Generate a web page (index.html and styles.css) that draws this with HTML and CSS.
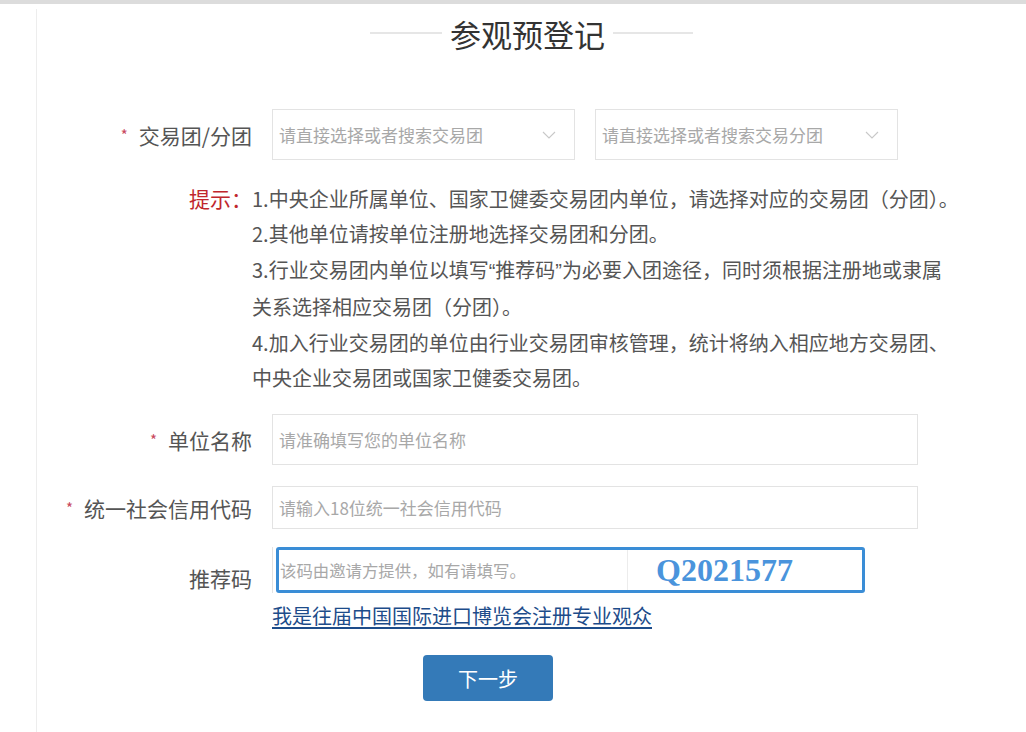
FILE: index.html
```html
<!DOCTYPE html>
<html lang="zh-CN">
<head>
<meta charset="utf-8">
<title>参观预登记</title>
<link rel="stylesheet" href="styles.css">
</head>
<body>
<div class="topbar"></div>
<div class="page">
  <div class="title">
    <span class="tline"></span>
    <h1>参观预登记</h1>
    <span class="tline"></span>
  </div>

  <div class="row row-group">
    <label class="lbl"><span class="req">*</span>交易团/分团</label>
    <div class="selects">
      <div class="select">
        <span class="ph">请直接选择或者搜索交易团</span>
        <svg class="chev" width="14" height="8" viewBox="0 0 14 8"><polyline points="1,1 7,7 13,1" fill="none" stroke="#c8c8c8" stroke-width="1.1"/></svg>
      </div>
      <div class="select">
        <span class="ph">请直接选择或者搜索交易分团</span>
        <svg class="chev" width="14" height="8" viewBox="0 0 14 8"><polyline points="1,1 7,7 13,1" fill="none" stroke="#c8c8c8" stroke-width="1.1"/></svg>
      </div>
    </div>
  </div>

  <div class="tip">
    <div class="tip-lbl">提示：</div>
    <div class="tip-body">
      <p>1.中央企业所属单位、国家卫健委交易团内单位，请选择对应的交易团（分团）。</p>
      <p>2.其他单位请按单位注册地选择交易团和分团。</p>
      <p>3.行业交易团内单位以填写<span class="q">“</span>推荐码<span class="q">”</span>为必要入团途径，同时须根据注册地或隶属<br>关系选择相应交易团（分团）。</p>
      <p>4.加入行业交易团的单位由行业交易团审核管理，统计将纳入相应地方交易团、<br>中央企业交易团或国家卫健委交易团。</p>
    </div>
  </div>

  <div class="row row-name">
    <label class="lbl"><span class="req">*</span>单位名称</label>
    <div class="input input-tall"><span class="ph">请准确填写您的单位名称</span></div>
  </div>

  <div class="row row-code">
    <label class="lbl"><span class="req">*</span>统一社会信用代码</label>
    <div class="input input-short"><span class="ph">请输入18位统一社会信用代码</span></div>
  </div>

  <div class="row row-ref">
    <label class="lbl lbl-low">推荐码</label>
    <div class="ref-field">
      <div class="ref-box">
        <span class="ref-ph">该码由邀请方提供，如有请填写。</span>
        <span class="ref-code">Q2021577</span>
      </div>
    </div>
  </div>

  <div class="link-row">
    <a class="prev-link" href="#">我是往届中国国际进口博览会注册专业观众</a>
  </div>

  <div class="btn-row">
    <button class="btn-next" type="button">下一步</button>
  </div>
</div>
</body>
</html>
```

FILE: styles.css
```css
* { box-sizing: border-box; }

html, body {
  margin: 0;
  padding: 0;
  background: #fff;
}

body {
  font-family: "Noto Sans CJK SC", "Noto Sans", sans-serif;
  color: #555;
  width: 1026px;
  height: 732px;
  overflow: hidden;
}

.topbar {
  height: 4px;
  background: #dcdcdc;
}

.page {
  margin-left: 36px;
  border-left: 1px solid #ededed;
  height: 728px;
}

/* title */
.title {
  margin-top: 5px;
  height: 50px;
  display: flex;
  justify-content: center;
  align-items: center;
  gap: 8px;
}

.title h1 {
  margin: 0;
  font-size: 31px;
  font-weight: 400;
  color: #333;
  line-height: 50px;
}

.tline {
  width: 72px;
  height: 2px;
  background: #e6e6e6;
  margin-bottom: 2px;
}

.tline:last-child { width: 80px; }

/* rows */
.row {
  display: flex;
  align-items: center;
}

.lbl {
  width: 215px;
  flex: none;
  text-align: right;
  font-size: 21px;
  line-height: 28px;
  color: #555;
}

.req {
  color: #c8475d;
  font-size: 15px;
  margin-right: 11px;
  vertical-align: 3px;
}

.row-group { margin-top: 50px; }

.selects {
  margin-left: 20px;
  display: flex;
  gap: 20px;
}

.select {
  width: 303px;
  height: 51px;
  border: 1px solid #e3e3e3;
  display: flex;
  align-items: center;
  justify-content: space-between;
  padding: 0 18px 0 6px;
}

.ph {
  font-size: 17px;
  color: #a8a8a8;
  white-space: nowrap;
}

.chev { flex: none; }

/* tip */
.tip {
  margin-top: 21px;
  display: flex;
  font-size: 20px;
  line-height: 35.4px;
}

.tip-lbl {
  width: 215px;
  flex: none;
  text-align: right;
  font-size: 21px;
  color: #c0262d;
}

.tip-body p {
  margin: 0;
  white-space: nowrap;
  color: #555;
}

.q {
  font-family: "Liberation Sans", sans-serif;
}

/* inputs */
.input {
  margin-left: 20px;
  width: 646px;
  border: 1px solid #e3e3e3;
  display: flex;
  align-items: center;
  padding: 0 6px;
}

.input-tall { height: 51px; }
.input-short { height: 43px; }

.row-name { margin-top: 19px; }
.row-code { margin-top: 21px; }

.row-ref {
  margin-top: 18px;
  align-items: flex-end;
}

.lbl-low { margin-bottom: 1px; }

.ref-field {
  margin-left: 20px;
  border-left: 1px solid #e3e3e3;
  padding-left: 3px;
}

.ref-box {
  width: 589px;
  height: 46px;
  border: 3px solid #3a8dd6;
  border-radius: 3px;
  display: flex;
  align-items: stretch;
}

.ref-ph {
  width: 349px;
  flex: none;
  border-right: 1px solid #ececec;
  padding-left: 1px;
  font-size: 16.4px;
  color: #a8a8a8;
  display: flex;
  align-items: center;
  white-space: nowrap;
}

.ref-code {
  padding-left: 28px;
  font-family: "Liberation Serif", "DejaVu Serif", serif;
  font-weight: 700;
  font-size: 32px;
  color: #4a94dc;
  display: flex;
  align-items: center;
  line-height: 1;
}

/* link */
.link-row {
  margin-top: 9px;
  padding-left: 235px;
  line-height: 28px;
}

.prev-link {
  font-size: 20px;
  color: #1d4c8a;
  text-decoration: underline;
  text-underline-offset: 3px;
}

/* button */
.btn-row {
  margin-top: 24px;
  padding-left: 386px;
}

.btn-next {
  width: 130px;
  height: 46px;
  border: none;
  border-radius: 4px;
  background: #347ab8;
  color: #fff;
  font-family: "Noto Sans CJK SC", sans-serif;
  font-size: 20px;
  padding: 0;
  cursor: pointer;
}
```
